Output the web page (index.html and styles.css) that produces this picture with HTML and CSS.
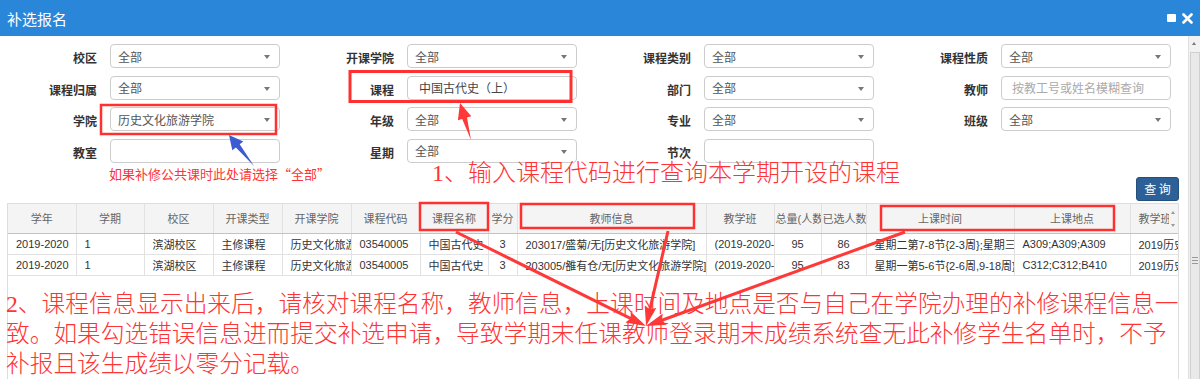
FILE: index.html
```html
<!DOCTYPE html>
<html lang="zh-CN">
<head>
  <meta charset="UTF-8">
  <title>补选报名</title>
  <link rel="stylesheet" href="styles.css">
</head>
<body>
  <div class="dialog">
    <div class="titlebar">
      <span class="title">补选报名</span>
      <span class="tools">
        <i class="max"></i>
        <svg class="close" width="11" height="11" viewBox="0 0 11 11"><path d="M1.5 1.5L9.5 9.5M9.5 1.5L1.5 9.5" stroke="#fff" stroke-width="2.6" stroke-linecap="round"/></svg>
      </span>
    </div>

    <div class="body">
      <div class="content">
        <div class="form">
          <div class="field"><label>校区</label><div class="input select">全部</div></div>
          <div class="field"><label>开课学院</label><div class="input select">全部</div></div>
          <div class="field"><label>课程类别</label><div class="input select">全部</div></div>
          <div class="field"><label>课程性质</label><div class="input select">全部</div></div>

          <div class="field"><label>课程归属</label><div class="input select">全部</div></div>
          <div class="field"><label>课程</label><div class="input text-wide">中国古代史（上）</div></div>
          <div class="field"><label>部门</label><div class="input select">全部</div></div>
          <div class="field"><label>教师</label><div class="input placeholder">按教工号或姓名模糊查询</div></div>

          <div class="field"><label>学院</label><div class="input select">历史文化旅游学院</div></div>
          <div class="field"><label>年级</label><div class="input select">全部</div></div>
          <div class="field"><label>专业</label><div class="input select">全部</div></div>
          <div class="field"><label>班级</label><div class="input select">全部</div></div>

          <div class="field"><label>教室</label><div class="input"></div></div>
          <div class="field"><label>星期</label><div class="input select">全部</div></div>
          <div class="field"><label>节次</label><div class="input"></div></div>
          <div class="field"></div>
        </div>

        <div class="toolbar">
          <button class="btn">查 询</button>
        </div>

        <div class="grid-wrap">
          <table class="grid">
            <colgroup>
              <col style="width:68px"><col style="width:68px"><col style="width:69px"><col style="width:69px">
              <col style="width:69px"><col style="width:69px"><col style="width:68px"><col style="width:29px">
              <col style="width:189px"><col style="width:68px"><col style="width:47px"><col style="width:45px">
              <col style="width:148px"><col style="width:116px"><col style="width:50px">
            </colgroup>
            <thead>
              <tr>
                <th>学年</th><th>学期</th><th>校区</th><th>开课类型</th><th>开课学院</th><th>课程代码</th>
                <th>课程名称</th><th>学分</th><th>教师信息</th><th>教学班</th><th>总量(人数</th><th>已选人数</th>
                <th>上课时间</th><th>上课地点</th><th>教学班</th>
              </tr>
            </thead>
            <tbody>
              <tr>
                <td>2019-2020</td><td>1</td><td>滨湖校区</td><td>主修课程</td><td>历史文化旅游</td><td>03540005</td>
                <td>中国古代史（</td><td class="c">3</td><td>203017/盛菊/无[历史文化旅游学院]</td><td>(2019-2020-1</td>
                <td class="c">95</td><td class="c">86</td><td>星期二第7-8节{2-3周};星期三第</td><td>A309;A309;A309</td><td>2019历史</td>
              </tr>
              <tr>
                <td>2019-2020</td><td>1</td><td>滨湖校区</td><td>主修课程</td><td>历史文化旅游</td><td>03540005</td>
                <td>中国古代史（</td><td class="c">3</td><td>203005/雒有仓/无[历史文化旅游学院]</td><td>(2019-2020-1</td>
                <td class="c">95</td><td class="c">83</td><td>星期一第5-6节{2-6周,9-18周};</td><td>C312;C312;B410</td><td>2019历史</td>
              </tr>
            </tbody>
          </table>
          <div class="tscroll"><span class="up"></span><span class="down"></span></div>
        </div>
      </div>

      <div class="vscroll">
        <span class="arrow-up"></span>
        <div class="thumb"><span class="grip"></span></div>
      </div>
    </div>

    <!-- annotations drawn over the screenshot -->
    <svg class="marks" width="1200" height="379" viewBox="0 0 1200 379">
      <defs>
        <marker id="head" viewBox="0 0 20 12" refX="14" refY="6" markerWidth="20" markerHeight="12" markerUnits="userSpaceOnUse" orient="auto">
          <path d="M0 0L20 6L0 12L3 6z" fill="#ff3838"/>
        </marker>
      </defs>
      <g fill="none" stroke="#ff3030" stroke-width="2.5">
        <rect x="101" y="105" width="175" height="29"/>
        <rect x="350" y="71.5" width="221" height="30" stroke-width="3"/>
        <rect x="420" y="203" width="68" height="27"/>
        <rect x="521" y="204" width="173" height="24"/>
        <rect x="881" y="206" width="233" height="24"/>
      </g>
      <polygon fill="#3a5bd2" points="254,166 239.7,144.3 243.3,141.5 229,135 232.3,150.3 235.9,147.5"/>
      <polygon fill="#ff3838" points="471,140 467,117.6 471.3,116.3 460,103 457.9,120.3 462.2,119"/>
      <g stroke="#ff3838" stroke-width="3" marker-end="url(#head)">
        <line x1="456" y1="232" x2="640.6" y2="323.3"/>
        <line x1="668" y1="231" x2="647.4" y2="320.2"/>
        <line x1="905" y1="232" x2="651.6" y2="324"/>
      </g>
    </svg>

    <p class="note note-college">如果补修公共课时此处请选择“全部”</p>
    <p class="note note-step1">1、输入课程代码进行查询本学期开设的课程</p>
    <p class="note note-step2">
      <span>2、课程信息显示出来后，请核对课程名称，教师信息，上课时间及地点是否与自己在学院办理的补修课程信息一</span>
      <span>致。如果勾选错误信息进而提交补选申请，导致学期末任课教师登录期末成绩系统查无此补修学生名单时，不予</span>
      <span>补报且该生成绩以零分记载。</span>
    </p>
  </div>
</body>
</html>
```

FILE: styles.css
```css
body {
  margin: 0;
  font-family: "Liberation Sans", "Noto Sans CJK SC", sans-serif;
  background: #fff;
  overflow: hidden;
}

.dialog {
  position: relative;
  width: 1200px;
  height: 379px;
  overflow: hidden;
}

.titlebar {
  height: 36px;
  background: #2a86d9;
  color: #fff;
  display: flex;
  align-items: center;
  justify-content: space-between;
  padding: 0 7px 0 7px;
}

.title {
  font-family: "Noto Sans CJK SC", sans-serif;
  font-size: 15px;
}

.tools {
  display: flex;
  align-items: center;
  gap: 6px;
}

.tools .max {
  width: 9px;
  height: 8px;
  background: #fff;
  border-radius: 1px;
}

.body {
  display: flex;
  height: 343px;
}

.content {
  width: 1188px;
}

/* search form */
.form {
  display: grid;
  grid-template-columns: repeat(4, 297px);
  grid-auto-rows: 24px;
  row-gap: 7.67px;
  padding-top: 8px;
}

.field {
  display: flex;
  align-items: center;
}

.field label {
  width: 97px;
  margin-right: 13px;
  margin-top: 3px;
  text-align: right;
  font-family: "Noto Sans CJK SC", sans-serif;
  font-size: 12px;
  font-weight: bold;
  color: #333;
}

.input {
  position: relative;
  width: 170px;
  height: 24px;
  box-sizing: border-box;
  border: 1px solid #ccc;
  border-radius: 4px;
  padding: 0 7px;
  display: flex;
  align-items: center;
  font-family: "Noto Sans CJK SC", sans-serif;
  font-size: 12px;
  color: #555;
}

.select::after {
  content: "";
  position: absolute;
  right: 9px;
  top: 10px;
  border-top: 4px solid #777;
  border-left: 3px solid transparent;
  border-right: 3px solid transparent;
}

.text-wide {
  padding-left: 11px;
  color: #444;
}

.placeholder {
  padding-left: 10px;
  color: #aaa;
}

.toolbar {
  display: flex;
  justify-content: flex-end;
  padding: 14px 9px 0 0;
}

.btn {
  width: 43px;
  height: 24px;
  padding: 0;
  border: 1px solid #234f7c;
  border-radius: 3px;
  background: #2c6096;
  color: #fff;
  font-family: "Noto Sans CJK SC", sans-serif;
  font-size: 12px;
}

/* result grid */
.grid-wrap {
  position: relative;
  margin: 2px 9px 0 7px;
  height: 200px;
  border: 1px solid #ddd;
  overflow: hidden;
}

.grid {
  table-layout: fixed;
  width: 1172px;
  border-collapse: collapse;
  font-size: 11px;
  color: #333;
}

.grid th,
.grid td {
  padding: 0 8px;
  white-space: nowrap;
  overflow: hidden;
  text-overflow: clip;
  border-right: 1px solid #e2e2e2;
}

.grid th {
  height: 29px;
  padding: 0 1px;
  font-weight: normal;
  font-size: 11px;
  color: #666;
  text-align: center;
  background: #f4f4f4;
  border-bottom: 1px solid #a9c9e8;
}

.grid td {
  height: 20px;
  border-bottom: 1px solid #e2e2e2;
}

.grid td.c {
  text-align: center;
  padding: 0 2px;
}

.tscroll {
  position: absolute;
  right: 0;
  top: 0;
  width: 9px;
  height: 29px;
  background: #f4f4f4;
}

.tscroll span {
  position: absolute;
  left: 2px;
  border-left: 2.5px solid transparent;
  border-right: 2.5px solid transparent;
}

.tscroll .up {
  top: 7px;
  border-bottom: 3px solid #999;
}

.tscroll .down {
  top: 20px;
  border-top: 3px solid #999;
}

/* page scrollbar */
.vscroll {
  position: relative;
  width: 11px;
  background: #f2f2f2;
  border-left: 1px solid #e0e0e0;
}

.arrow-up {
  position: absolute;
  left: 3px;
  top: 6px;
  border-bottom: 3px solid #777;
  border-left: 2.5px solid transparent;
  border-right: 2.5px solid transparent;
}

.thumb {
  position: relative;
  margin: 16px 0 0 1px;
  width: 8px;
  height: 400px;
  border: 1px solid #cfcfcf;
  background: #e9e9e9;
}

.grip {
  position: absolute;
  left: 1px;
  top: 204px;
  width: 6px;
  height: 5px;
  border-top: 1px solid #999;
  border-bottom: 1px solid #999;
}

.grip::after {
  content: "";
  position: absolute;
  left: 0;
  top: 2px;
  width: 6px;
  border-top: 1px solid #999;
}

/* annotations */
.marks {
  position: absolute;
  left: 0;
  top: 0;
  pointer-events: none;
}

.note {
  position: absolute;
  margin: 0;
  color: #ff3333;
  white-space: nowrap;
  font-family: "Liberation Serif", "Noto Sans CJK SC", serif;
  font-weight: 300;
}

.note-college {
  left: 109px;
  top: 166px;
  font-family: "Noto Sans CJK SC", sans-serif;
  font-weight: normal;
  font-size: 13px;
  line-height: 16px;
}

.note-step1 {
  left: 432px;
  top: 158px;
  font-size: 24px;
  line-height: 30px;
}

.note-step2 {
  left: 6px;
  top: 289px;
  font-size: 23.7px;
  line-height: 30px;
}

.note-step2 span {
  display: block;
}
```
